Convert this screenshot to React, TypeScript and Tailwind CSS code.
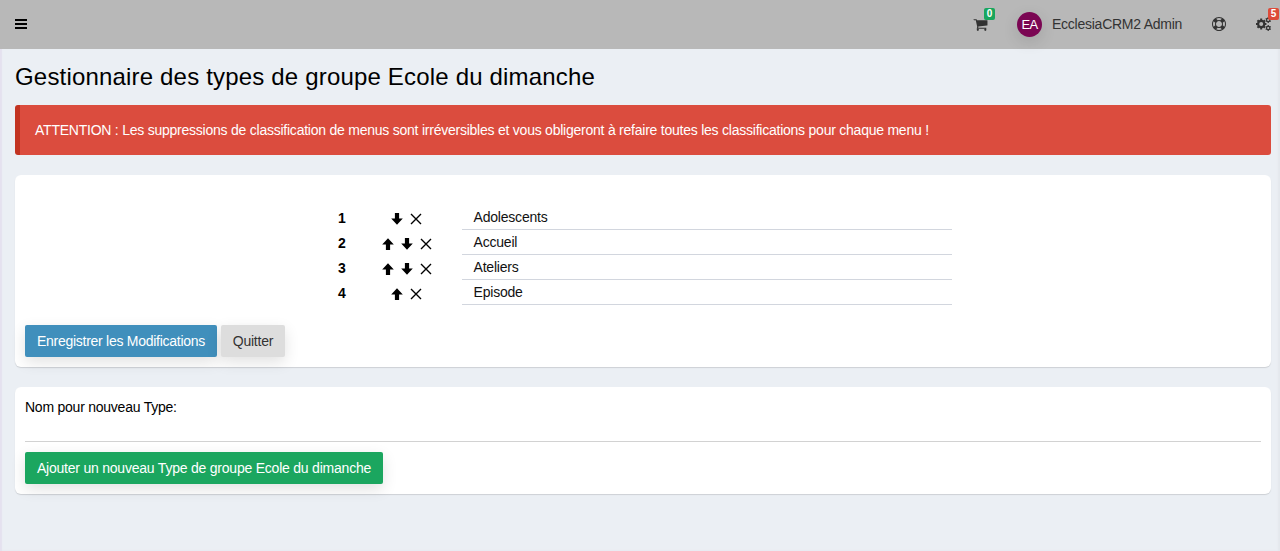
const rows = [
  { name: "Adolescents", up: false, down: true },
  { name: "Accueil", up: true, down: true },
  { name: "Ateliers", up: true, down: true },
  { name: "Episode", up: true, down: false },
];

function Arrow({ down = false }: { down?: boolean }) {
  return (
    <svg viewBox="0 0 12 12" className={down ? "size-3 rotate-180" : "size-3"}>
      <path d="M6 0.3 11.8 6.5H8.1V12H3.9V6.5H0.2Z" fill="#000" />
    </svg>
  );
}

function Cross() {
  return (
    <svg viewBox="0 0 12 12" className="size-3">
      <path d="M1 1 11 11M11 1 1 11" stroke="#000" strokeWidth="1.4" />
    </svg>
  );
}

function Bars() {
  return (
    <svg viewBox="0 0 12 12" className="mb-[2px] h-3 w-3">
      <path d="M0 2h12M0 6h12M0 10h12" stroke="#000" strokeWidth="2.2" />
    </svg>
  );
}

function Cart() {
  return (
    <svg viewBox="0 0 1792 1792" className="size-[15px]" fill="#333">
      <path d="M704 1536q0 52-38 90t-90 38-90-38-38-90 38-90 90-38 90 38 38 90zm896 0q0 52-38 90t-90 38-90-38-38-90 38-90 90-38 90 38 38 90zm128-1088v512q0 24-16.5 42.5t-40.5 21.5l-1044 122q13 60 13 70 0 16-24 64h920q26 0 45 19t19 45-19 45-45 19h-1024q-26 0-45-19t-19-45q0-11 8-31.5t16-36 21.5-40 15.5-29.5l-177-823h-204q-26 0-45-19t-19-45 19-45 45-19h256q16 0 28.5 6.5t19.5 15.5 13 24.5 8 26 5.5 29.5 4.5 26h1201q26 0 45 19t19 45z" />
    </svg>
  );
}

function LifeRing() {
  return (
    <svg viewBox="0 0 1792 1792" className="mb-[1px] size-3.5" fill="#333">
      <path d="M896 0q182 0 348 71t286 191 191 286 71 348-71 348-191 286-286 191-348 71-348-71-286-191-191-286-71-348 71-348 191-286 286-191 348-71zm0 128q-190 0-361 90l194 194q82-28 167-28t167 28l194-194q-171-90-361-90zm-678 1129l194-194q-28-82-28-167t28-167l-194-194q-90 171-90 361t90 361zm678 407q190 0 361-90l-194-194q-82 28-167 28t-167-28l-194 194q171 90 361 90zm0-384q159 0 271.5-112.5t112.5-271.5-112.5-271.5-271.5-112.5-271.5 112.5-112.5 271.5 112.5 271.5 271.5 112.5zm484-217l194 194q90-171 90-361t-90-361l-194 194q28 82 28 167t-28 167z" />
    </svg>
  );
}

function Cogs() {
  return (
    <svg viewBox="0 0 15 14" className="h-[14px] w-[15px]" fill="none" stroke="#333">
      <circle cx="5.2" cy="7" r="3.1" strokeWidth="2.2" />
      <path d="M5.2 1.6v2M5.2 10.4v2M0 7h1.8M8.6 7h1.8M1.5 3.3l1.3 1.3M7.6 9.4l1.3 1.3M1.5 10.7l1.3-1.3M7.6 4.6l1.3-1.3" strokeWidth="2" />
      <circle cx="12.2" cy="3" r="1.7" strokeWidth="1.2" />
      <path d="M12.2.1v1M12.2 4.9v1M9.7 1.6l.9.5M13.8 3.9l.9.5M9.7 4.4l.9-.5M13.8 2.1l.9-.5" strokeWidth="1.2" />
      <circle cx="12.2" cy="11" r="1.7" strokeWidth="1.2" />
      <path d="M12.2 8.1v1M12.2 12.9v1M9.7 9.6l.9.5M13.8 11.9l.9.5M9.7 12.4l.9-.5M13.8 10.1l.9-.5" strokeWidth="1.2" />
    </svg>
  );
}

export default function App() {
  return (
    <div className="h-[551px] w-[1280px] overflow-hidden bg-[#ebeff4] font-['Liberation_Sans',Arial,sans-serif] text-[14px] leading-5 text-black shadow-[inset_2px_0_1px_#e5e1ef,inset_-2px_0_2px_#e4e7ed]">
      <header className="flex h-[49px] items-center bg-[#b8b8b8] pl-[15px] text-[#333]">
        <Bars />
        <div className="relative ml-[946px] mb-[1px] w-[15px]">
          <Cart />
          <span className="absolute -top-[9px] left-[11px] flex h-3 w-[11px] items-center justify-center rounded-[2px] bg-[#18a65d] text-[10px] font-bold text-white">0</span>
        </div>
        <div className="ml-[29px] flex size-[25px] items-center justify-center rounded-full bg-[#7b0653] text-[13px] tracking-[-0.6px] text-white shadow-[0_5px_16px_rgba(0,0,0,0.12)]">EA</div>
        <span className="ml-[10px] w-[160px] whitespace-nowrap pb-[2px] tracking-[-0.25px]">EcclesiaCRM2 Admin</span>
        <LifeRing />
        <div className="relative ml-[30px] mb-[2px] w-4">
          <Cogs />
          <span className="absolute -top-[9px] left-[12px] flex h-3 w-[11px] items-center justify-center rounded-[2px] bg-[#dd4b39] text-[10px] font-bold text-white">5</span>
        </div>
      </header>
      <main className="pl-[15px] pr-[9px]">
        <h1 className="flex h-14 items-center whitespace-nowrap text-[24px] tracking-[0.18px]">Gestionnaire des types de groupe Ecole du dimanche</h1>
        <div className="flex h-[50px] items-center whitespace-nowrap rounded-[3px] border-l-[5px] border-[#c23321] bg-[#db4c3e] pl-[15px] tracking-[-0.235px] text-white">
          ATTENTION : Les suppressions de classification de menus sont irréversibles et vous obligeront à refaire toutes les classifications pour chaque menu !
        </div>
        <section className="mt-5 h-48 rounded-md bg-white px-[10px] pt-[30px] shadow-[0_1px_1px_rgba(0,0,0,0.13)]">
          <div className="pl-[298px]">
            {rows.map((row, index) => (
              <div key={row.name} className="flex h-[25px] items-center">
                <b className="w-[38px] pl-[15px]">{index + 1}</b>
                <div className="flex w-[91px] items-center justify-center gap-[7px] pt-[3px]">
                  {row.up && <Arrow />}
                  {row.down && <Arrow down />}
                  <Cross />
                </div>
                <div className="ml-[10px] h-[25px] w-[490px] border-b border-[#d2d6de] pl-[11.5px] pt-[2px] tracking-[-0.2px] text-[#111]">
                  {row.name}
                </div>
              </div>
            ))}
          </div>
          <div className="mt-5 flex gap-1">
            <button className="h-8 w-48 whitespace-nowrap rounded-[2px] bg-[#408fbc] tracking-[-0.27px] text-white shadow-[0_5px_15px_rgba(0,0,0,0.12)]">Enregistrer les Modifications</button>
            <button className="h-8 w-16 rounded-[2px] bg-[#ddd] tracking-[-0.2px] text-[#333] shadow-[0_5px_15px_rgba(0,0,0,0.12)]">Quitter</button>
          </div>
        </section>
        <section className="mt-5 h-[107px] rounded-md bg-white px-[10px] pt-[10px] shadow-[0_1px_1px_rgba(0,0,0,0.13)]">
          <label htmlFor="type-name" className="block h-5 tracking-[-0.24px]">Nom pour nouveau Type:</label>
          <input id="type-name" className="block h-[25px] w-full border-b border-[#d2d2d2] outline-none" />
          <button className="mt-[10px] h-8 w-[358px] whitespace-nowrap rounded-[2px] bg-[#1ba65f] tracking-[-0.22px] text-white shadow-[0_5px_15px_rgba(0,0,0,0.12)]">Ajouter un nouveau Type de groupe Ecole du dimanche</button>
        </section>
      </main>
    </div>
  );
}
